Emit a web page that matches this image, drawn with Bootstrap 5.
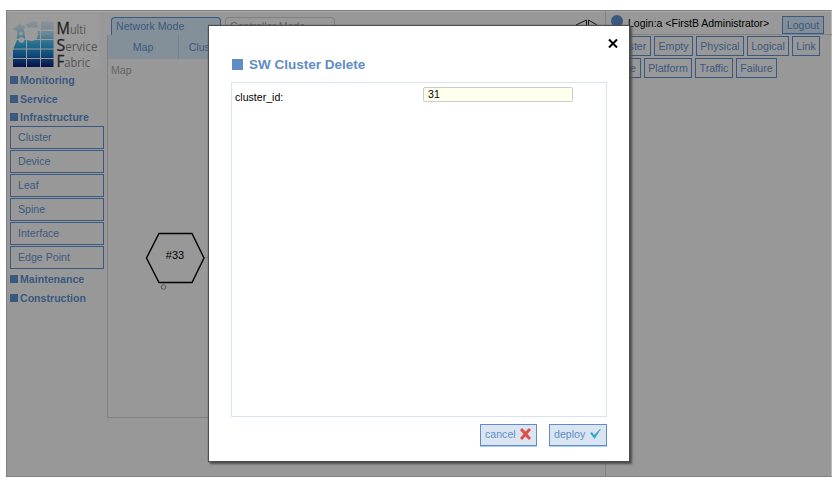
<!DOCTYPE html>
<html lang="en">
<head>
<meta charset="utf-8">
<title>Multi Service Fabric</title>
<link href="https://cdn.jsdelivr.net/npm/bootstrap@5.3.0/dist/css/bootstrap.min.css" rel="stylesheet">
<style>
:root{--ink:#3a5980;--edge:#808080;--blue:#5f8dc5}
body{font:10.6px/14px "Liberation Sans",Arial,sans-serif;background:#fff;color:#000;height:481px;overflow:hidden;padding:10px 8px 4px 6px}
.app-frame{height:467px;background:#989898;border:1px solid var(--edge);border-right-color:#bcbcbc;box-shadow:inset 0 1px #a8a8a8}
.side{width:100px;padding:2px 0 0 3px}
.brand{width:94px;height:56px;overflow:visible;margin-bottom:2px}
.side-head{height:19px;font-weight:bold;color:var(--ink);line-height:19px;gap:2px}
.side-head i{width:8px;height:8px;background:var(--ink);margin-top:-1px}
.side-head.tight{height:17px;line-height:17px}
.side-list{gap:1px;width:94px;margin-bottom:1px}
.side-list a{height:23px;border:1px solid var(--ink);padding-left:7px;line-height:21px}
a{color:var(--ink);text-decoration:none}
.middle{width:498px}
.tabs{height:24px;padding:6px 0 0 4px;gap:4px}
.tab{width:110px;height:18px;border:1px solid var(--edge);border-bottom:0;border-radius:4px 4px 0 0;padding-left:4px;line-height:17px;color:#606060}
.tab.on{border-color:var(--ink);background:#849099;color:var(--ink)}
.arrows{margin:2px 7px 0 auto}
.workspace{height:383px;border-left:1px solid var(--edge);border-bottom:1px solid var(--edge)}
.subnav{height:24px;background:#849099}
.subnav a{width:71px;border-right:1px solid #74818d;line-height:24px;text-align:center}
.subnav .narrow{width:54px}
.crumb{color:#646464;padding:4px 3px}
.topo{width:200px;height:90px;margin-top:147px}
.right{width:227px;border-left:1px solid var(--edge)}
.userbar{height:24px;border-bottom:1px solid #828282;padding-left:5px}
.avatar{width:12px;height:12px;border-radius:50%;background:var(--ink);margin-top:4px}
.login{margin:5px 0 0 5px;white-space:nowrap;font-size:10.5px}
.logout{width:42px;height:18px;margin:5px 8px 0 auto;border:1px solid var(--ink);background:#848e99;box-shadow:0 1px #7189a5;text-align:center;line-height:16px}
.chips{gap:3px;padding-left:2px;height:20px;margin-top:1px}
.chips a{border:1px solid var(--ink);line-height:18px;height:20px;text-align:center}
.chips + .chips{margin-top:2px}
.dialog-box{position:absolute;left:209px;top:26px;width:420px;height:435px;background:#fff;box-shadow:0 0 1px 1px #4d4d4d,2px 2px 2px 1px #4d4d4d;padding:12px 22px 15px}
.dialog-close{width:10px;height:10px;margin-right:-11px}
.dialog-title{font-size:13.5px;line-height:16px;font-weight:bold;color:var(--blue);margin-top:9px;padding-left:1px;gap:6px}
.dialog-title i{width:11px;height:11px;background:var(--blue);margin-top:-1px}
.dialog-body{height:335px;margin-top:9px;border:1px solid #dae4f1;padding:4px 3px}
.dialog-body label{width:188px;padding-top:3px}
.dialog-body input{width:150px;height:15px;border:1px solid #ccc;border-radius:2px;background:#ffffed;padding:0 4px 1px;font-size:10.6px;line-height:12px;color:#000;outline:0}
.actions{gap:12px;margin-top:7px}
.act{height:22px;border:1px solid var(--blue);border-radius:0;background:#dbe5f1;box-shadow:0 1px #a8ceff;color:var(--blue);font-size:10.6px;line-height:19px;padding:0 4px 1px;width:57px;justify-content:space-between}
.act svg{margin-top:-1px}
.act.wide{width:58px}
.act:hover{background:#dbe5f1;color:var(--blue)}
</style>
<script src="https://cdn.jsdelivr.net/npm/bootstrap@5.3.0/dist/js/bootstrap.bundle.min.js"></script>
</head>
<body>
<div class="app-frame d-flex">
  <nav class="side flex-shrink-0">
    <svg class="brand d-block" viewBox="10 13 94 56">
      <defs><linearGradient id="tiles" gradientUnits="userSpaceOnUse" x1="0" y1="20" x2="0" y2="68"><stop offset="0" stop-color="#8e9599"/><stop offset=".28" stop-color="#6c8793"/><stop offset=".5" stop-color="#23708f"/><stop offset=".72" stop-color="#0f4c7c"/><stop offset="1" stop-color="#080c42"/></linearGradient></defs>
      <path fill="#9b9b9b" d="M10 14h89v54H10z"/>
      <g fill="url(#tiles)">
        <path d="M41 21.500h12.500v8H41zM41 31h12.500v8H41zM27 31h13v8H27zM41 40h12.500v8.500H41zM27 40h13v8.500H27zM17 40h9v8.500H13.500zM13 49.500h13V58H13zM27 49.500h13V58H27zM41 49.500h12.500V58H41zM13 59h13v8H13zM27 59h13v8H27zM41 59h12.500v8H41z"/>
        <path d="M20 23l2 2.500 3.500.5-2 3 1.500 4.500 1 3.500-1.500 2-8-.5 1-5-1-2.500-4-2 4-2.500zM32 21l6 1-1 3 2 2.500H27l-1.500-3.500 3-.5z"/>
      </g>
      <g fill="#9b9b9b"><circle cx="31.300" cy="34.300" r="6.700"/><circle cx="21.500" cy="40" r="2.800"/><circle cx="21" cy="33.800" r="1.700"/></g>
      <g font-family="Open Sans,sans-serif" font-size="12.500" fill="#555"><text x="56.500" y="34" textLength="29.500" lengthAdjust="spacingAndGlyphs"><tspan font-size="17" fill="#242424" stroke="#242424" stroke-width=".3">M</tspan>ulti</text><text x="56.500" y="51" textLength="41" lengthAdjust="spacingAndGlyphs"><tspan font-size="17" fill="#242424" stroke="#242424" stroke-width=".3">S</tspan>ervice</text><text x="56.500" y="67" textLength="33.500" lengthAdjust="spacingAndGlyphs"><tspan font-size="17" fill="#242424" stroke="#242424" stroke-width=".3">F</tspan>abric</text></g>
    </svg>
    <div class="side-head d-flex align-items-center"><i></i>Monitoring</div>
    <div class="side-head d-flex align-items-center"><i></i><span class="ps-0">Service</span></div>
    <div class="side-head tight d-flex align-items-center"><i></i>Infrastructure</div>
    <div class="side-list d-flex flex-column"><a href="#">Cluster</a><a href="#">Device</a><a href="#">Leaf</a><a href="#">Spine</a><a href="#">Interface</a><a href="#">Edge Point</a></div>
    <div class="side-head d-flex align-items-center"><i></i>Maintenance</div>
    <div class="side-head d-flex align-items-center"><i></i>Construction</div>
  </nav>
  <main class="middle flex-shrink-0">
    <div class="tabs d-flex"><div class="tab on">Network Mode</div><div class="tab">Controller Mode</div>
      <svg class="arrows" width="24" height="12" viewBox="0 0 24 12" fill="none" stroke="#151515"><path d="M12.500 1L2 6l10.500 5zM14.500 1v10L23 6z"/></svg>
    </div>
    <div class="workspace">
      <div class="subnav d-flex"><a href="#">Map</a><a class="narrow" href="#">Cluster</a></div>
      <div class="crumb">Map</div>
      <svg class="topo d-block" viewBox="108 228 200 90"><path d="M205 257.500h40" stroke="#808080"/><path d="M159 233.500h33L204 258l-12 24.500h-33L146.500 258z" fill="none" stroke="#000" stroke-width="1.400"/><circle cx="163.500" cy="287" r="2.300" fill="none" stroke="#555"/><text x="175" y="259" font-size="11" text-anchor="middle">#33</text></svg>
    </div>
  </main>
  <aside class="right flex-shrink-0">
    <div class="userbar d-flex"><span class="avatar"></span><span class="login">Login:a &lt;FirstB Administrator&gt;</span><a class="logout" href="#">Logout</a></div>
    <div class="chips d-flex"><a href="#" style="width:43px">Cluster</a><a href="#" style="width:39px">Empty</a><a href="#" style="width:48px">Physical</a><a href="#" style="width:42px">Logical</a><a href="#" style="width:28px">Link</a></div>
    <div class="chips d-flex"><a href="#" style="width:33px">Slice</a><a href="#" style="width:48px">Platform</a><a href="#" style="width:38px">Traffic</a><a href="#" style="width:41px">Failure</a></div>
  </aside>
</div>
<section class="dialog-box" role="dialog">
  <div class="d-flex justify-content-end"><svg class="dialog-close" viewBox="0 0 10 10" stroke="#000" stroke-width="2"><path d="M1 1.500l8 8M9 1.500l-8 8"/></svg></div>
  <h1 class="dialog-title d-flex align-items-center mb-0"><i></i>SW Cluster Delete</h1>
  <div class="dialog-body d-flex align-items-start"><label for="cid">cluster_id:</label><input id="cid" value="31"></div>
  <div class="actions d-flex justify-content-end">
    <button class="act btn d-flex align-items-center">cancel<svg width="13" height="12" viewBox="0 0 13 12"><path d="M1 2l2-2 3.500 3.500L10 0l2 2-3.500 4L12 10l-2 2-3.500-3.500L3 12l-2-2 3.500-4z" fill="#e04f4a"/></svg></button>
    <button class="act wide btn d-flex align-items-center">deploy<svg width="13" height="12" viewBox="0 0 13 12"><path d="M1 5l2-1 2 3 6-6h1L5.500 11z" fill="#35a8d0"/></svg></button>
  </div>
</section>
</body>
</html>
